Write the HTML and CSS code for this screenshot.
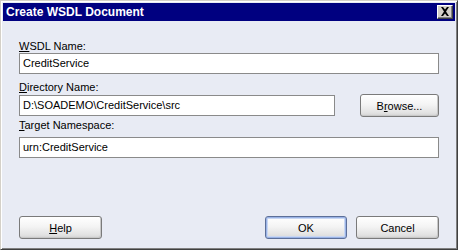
FILE: index.html
```html
<!DOCTYPE html>
<html>
<head>
<meta charset="utf-8">
<link rel="stylesheet" href="styles.css">
</head>
<body>
<div class="window">
  <div class="titlebar">
    <span class="title">Create WSDL Document</span>
    <div class="close">
      <svg width="10" height="9" viewBox="0 0 10 9"><path d="M1 0h2l2 2.5 2-2.5h2l-3 4.5 3 4.5h-2l-2-2.5-2 2.5h-2l3-4.5z" fill="#000"/></svg>
    </div>
  </div>
  <div class="content">
    <div class="field f1">
      <div class="label"><u>W</u>SDL Name:</div>
      <div class="input">CreditService</div>
    </div>
    <div class="field f2">
      <div class="label"><u>D</u>irectory Name:</div>
      <div class="row">
        <div class="input grow">D:\SOADEMO\CreditService\src</div>
        <div class="btn browse">B<u>r</u>owse...</div>
      </div>
    </div>
    <div class="field f3">
      <div class="label"><u>T</u>arget Namespace:</div>
      <div class="input">urn:CreditService</div>
    </div>
    <div class="spacer"></div>
    <div class="buttons">
      <div class="btn help"><u>H</u>elp</div>
      <div class="right">
        <div class="btn ok">OK</div>
        <div class="btn cancel">Cancel</div>
      </div>
    </div>
  </div>
</div>
</body>
</html>
```

FILE: styles.css
```css
html, body {
  margin: 0;
  padding: 0;
  background: #e8ebf4;
}
.window {
  box-sizing: border-box;
  width: 458px;
  height: 250px;
  border: 1px solid;
  border-color: #d4d0c8 #404040 #404040 #d4d0c8;
  box-shadow: inset 1px 1px 0 #ffffff, inset -1px -1px 0 #808080;
  display: flex;
  flex-direction: column;
}
.titlebar {
  margin: 2px 2px 0 2px;
  height: 18px;
  background: #000080;
  display: flex;
  align-items: center;
  justify-content: space-between;
  padding: 0 2px 0 3px;
}
.title {
  font-family: "Liberation Sans", Arial, sans-serif;
  font-weight: bold;
  font-size: 12px;
  color: #ffffff;
}
.close {
  box-sizing: border-box;
  width: 16px;
  height: 14px;
  background: #d4d0c8;
  border: 1px solid;
  border-color: #ffffff #404040 #404040 #ffffff;
  box-shadow: inset -1px -1px 0 #808080;
  display: flex;
  align-items: center;
  justify-content: center;
  padding: 0 1px 1px 0;
}
.close svg { display: block; }
.content {
  flex: 1;
  display: flex;
  flex-direction: column;
  padding: 0 18px 10px 18px;
  font-family: "Liberation Sans", Arial, sans-serif;
  font-size: 11px;
  color: #000;
}
.label {
  line-height: 13px;
  height: 13px;
}
.input {
  box-sizing: border-box;
  height: 21px;
  background: #ffffff;
  border: 1px solid #8a8a8a;
  line-height: 19px;
  padding-left: 3px;
  white-space: nowrap;
}
.f1 { margin-top: 19px; }
.f2 { margin-top: 7px; }
.f3 { margin-top: 2px; }
.f3 .input { margin-top: 5px; }
.row {
  display: flex;
  align-items: center;
  gap: 25px;
}
.grow { flex: 1; }
.spacer { flex: 1; }
.btn {
  box-sizing: border-box;
  height: 23px;
  border: 1px solid #7a7a7a;
  border-radius: 3px;
  background: linear-gradient(#ffffff 0%, #f4f4f4 45%, #e2e2e2 85%, #d2d2d2 100%);
  box-shadow: inset -1px -1px 0 #c8c8c8;
  display: flex;
  align-items: center;
  justify-content: center;
  padding-top: 1px;
}
.browse { width: 79px; }
.buttons {
  display: flex;
  justify-content: space-between;
}
.right {
  display: flex;
  gap: 9px;
}
.help { width: 83px; }
.ok {
  width: 82px;
  border-color: #5c6f99;
  box-shadow: inset 0 0 0 1px #9ab3e6, inset 0 0 0 2px #c9d7f2;
}
.cancel { width: 83px; }
```
